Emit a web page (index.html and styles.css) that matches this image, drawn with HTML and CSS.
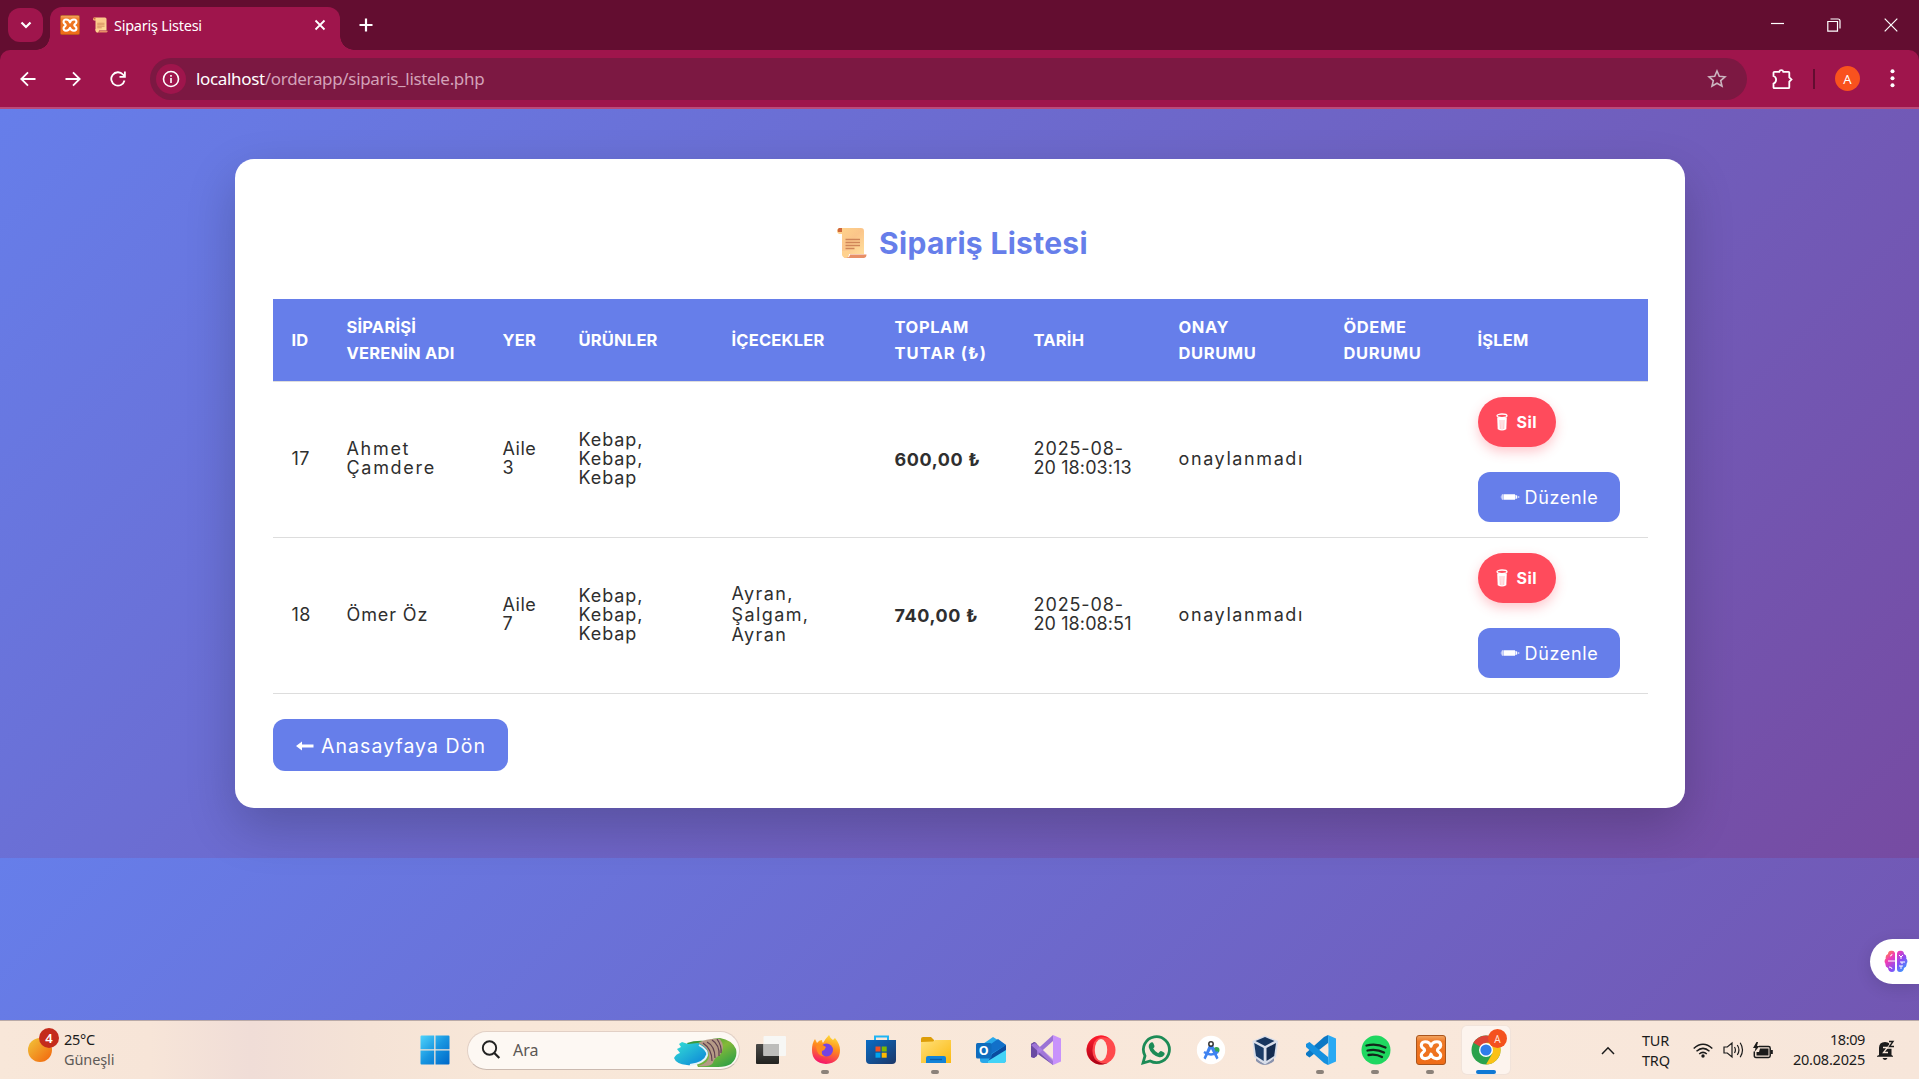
FILE: index.html
```html
<!DOCTYPE html>
<html lang="tr">
<head>
<meta charset="utf-8">
<title>Sipariş Listesi</title>
<link rel="stylesheet" href="styles.css">
</head>
<body>
<svg class="defs" width="0" height="0">
  <defs>
    <linearGradient id="gScroll" x1="0" y1="0" x2="1" y2="1"><stop offset="0" stop-color="#ffd58c"/><stop offset=".5" stop-color="#fbc58a"/><stop offset="1" stop-color="#ffdf9c"/></linearGradient>
    <linearGradient id="gXampp" x1="0" y1="0" x2="0" y2="1"><stop offset="0" stop-color="#f3a765"/><stop offset=".2" stop-color="#ee7a28"/><stop offset="1" stop-color="#ef6b16"/></linearGradient>
    <linearGradient id="gWin" x1="0" y1="0" x2="1" y2="1"><stop offset="0" stop-color="#4fd3fb"/><stop offset=".5" stop-color="#1795e0"/><stop offset="1" stop-color="#0067c8"/></linearGradient>
    <linearGradient id="gSun" x1="0" y1="0" x2="1" y2="1"><stop offset="0" stop-color="#f1c63a"/><stop offset="1" stop-color="#f2630c"/></linearGradient>
    <linearGradient id="gFox" x1=".7" y1="0" x2=".4" y2="1"><stop offset="0" stop-color="#ffe03a"/><stop offset=".45" stop-color="#ff8a1c"/><stop offset="1" stop-color="#f5126d"/></linearGradient>
    <linearGradient id="gFolder" x1="0" y1="0" x2="1" y2="1"><stop offset="0" stop-color="#ffe07a"/><stop offset="1" stop-color="#fbb90f"/></linearGradient>
    <linearGradient id="gStore" x1="0" y1="0" x2="1" y2="1"><stop offset="0" stop-color="#0a6cc4"/><stop offset="1" stop-color="#1c3768"/></linearGradient>
    <linearGradient id="gOpera" x1="0" y1="0" x2="0" y2="1"><stop offset="0" stop-color="#ff1b2d"/><stop offset="1" stop-color="#a70014"/></linearGradient>
    <linearGradient id="gBrain" x1="0" y1="0" x2="1" y2="1"><stop offset="0" stop-color="#ff9b2f"/><stop offset=".3" stop-color="#f23bb4"/><stop offset=".6" stop-color="#8a4cf5"/><stop offset="1" stop-color="#1fb0ff"/></linearGradient>
    <linearGradient id="gSea" x1="0" y1="0" x2="1" y2="1"><stop offset="0" stop-color="#35e0d5"/><stop offset="1" stop-color="#0a7fd8"/></linearGradient>
    <linearGradient id="gHill" x1="0" y1="0" x2="1" y2="1"><stop offset="0" stop-color="#1c8a3c"/><stop offset=".5" stop-color="#84b938"/><stop offset="1" stop-color="#1d9b4a"/></linearGradient>
    <linearGradient id="gDark" x1="0" y1="0" x2="0" y2="1"><stop offset="0" stop-color="#4a4a48"/><stop offset="1" stop-color="#222220"/></linearGradient>
    <symbol id="scroll" viewBox="0 0 30 32">
      <path d="M2 1h22q3 0 3 3v23H7q-2 0-2-3V7H2Q0 6 0 4t2-3z" fill="url(#gScroll)"/>
      <path d="M2 1h3v4H1Q0 2 2 1z" fill="#d0683c"/>
      <path d="M5 24q0 5 3 7h19q2.500-.5 2.500-3.500H13q0 2-2 3" fill="#e88f66"/>
      <path d="M5 24v4q1 3 4 3 3-.5 3-4V24z" fill="#ffd28f"/>
      <path d="M8.500 12.500h14.500M8.500 15.500h14.500M8.500 18.500h14.500M8.500 21.500h9" stroke="#cf8558" stroke-width="1.500" fill="none"/>
    </symbol>
    <symbol id="xampp" viewBox="0 0 30 30">
      <rect x=".5" y=".5" width="29" height="29" rx="2.500" fill="url(#gXampp)" stroke="#a9551d"/>
      <path d="M15 11.200C14 7 10.800 6.800 9 6.800 6.500 6.800 5.300 8.500 5.300 10.500 5.300 13 8.600 13.500 8.600 15.200S5.300 17.500 5.300 20C5.300 22.200 6.800 23.600 9 23.600 11.500 23.600 14 23 15 19.200 16 23 18.500 23.600 21 23.600 23.200 23.600 24.700 22.200 24.700 20 24.700 17.500 21.400 16.900 21.400 15.200S24.700 13 24.700 10.500C24.700 8.500 23.500 6.800 21 6.800 19.200 6.800 16 7 15 11.200z" fill="none" stroke="#fff" stroke-width="3.100" stroke-linejoin="round"/>
    </symbol>
    <symbol id="trash" viewBox="0 0 12 18">
      <ellipse cx="6" cy="2.800" rx="5" ry="1.800" fill="none" stroke="#fff" stroke-width="1.300"/>
      <path d="M1.200 4.500h9.600l-.5 11.700q-4.300 2.500-8.600 0z" fill="#fff"/>
      <path d="M4 7l.3 9M6 7v9.500M8 7l-.3 9" stroke="#ffa3ab" stroke-width=".7"/>
    </symbol>
    <symbol id="pencil" viewBox="0 0 20 8">
      <path d="M1.500 1.300v5.400Q0 4 1.500 1.300zM2.300 1.300h1.300v5.400H2.300zM4 1.300H15v5.400H4zM15.400 1.800L17.300 2.800v2.400l-1.900 1zM18 3.200L20 4l-2 .8z" fill="#fff"/>
    </symbol>
  </defs>
</svg>

<header class="browser">
  <div class="tabstrip">
    <button class="tab-search"><svg width="12" height="8" viewBox="0 0 12 8"><path d="M1.500 1.500L6 6l4.500-4.500" class="ln w2"/></svg></button>
    <div class="tab">
      <svg width="20" height="20"><use href="#xampp"/></svg>
      <svg class="tab-emoji" width="15" height="16"><use href="#scroll"/></svg>
      <span class="tab-title">Sipariş Listesi</span>
      <svg class="tab-close" width="12" height="12" viewBox="0 0 12 12"><path d="M1.500 1.500l9 9M10.500 1.500l-9 9" class="ln"/></svg>
    </div>
    <svg class="new-tab" width="14" height="14" viewBox="0 0 14 14"><path d="M7 .5v13M.5 7h13" class="ln w2"/></svg>
    <div class="window-buttons">
      <svg width="13" height="14" viewBox="0 0 13 14"><path d="M0 5.500h13" class="ln w1"/></svg>
      <svg width="14" height="14" viewBox="0 0 14 14"><path d="M.8 3.500h9.700v9.700H.8zM3.500 1h7.500q2 0 2 2v7.500" class="ln w1"/></svg>
      <svg width="14" height="14" viewBox="0 0 14 14"><path d="M.7 .7l12.600 12.600M13.300 .7L.7 13.300" class="ln w1"/></svg>
    </div>
  </div>
  <div class="toolbar">
    <div class="nav">
      <svg width="16" height="16" viewBox="0 0 16 16"><path d="M15.500 8H1.500M8 1.300L1.300 8 8 14.700" class="ln"/></svg>
      <svg width="16" height="16" viewBox="0 0 16 16"><path d="M.5 8h14M8 1.300L14.700 8 8 14.700" class="ln"/></svg>
      <svg width="16" height="16" viewBox="0 0 16 16"><path d="M14.500 9.500A6.700 6.700 0 1 1 13 3.500L14.500 5.300M14.900 .5v5.400H9.500" class="ln"/></svg>
    </div>
    <div class="omnibox">
      <span class="site-info"><svg width="18" height="18" viewBox="0 0 18 18"><circle cx="9" cy="9" r="7.500" class="ln w15"/><path d="M9 8v5M9 5v1.800" class="ln w15"/></svg></span>
      <span class="url"><b>localhost</b>/orderapp/siparis_listele.php</span>
      <svg class="star" width="20" height="20" viewBox="0 0 20 20"><path d="M10 2l2.300 5.300 5.700.5-4.300 3.800 1.300 5.600L10 14.200 5 17.200l1.300-5.600L2 7.800l5.700-.5z" fill="none" stroke="#cbb5bf" stroke-width="1.600"/></svg>
    </div>
    <svg class="puzzle" width="22" height="22" viewBox="0 0 22 22"><path d="M3.500 3.800h4.800q.3-1.600 2-1.600t2 1.600H17.500q.8 0 .8.800V9.300l2.200 2.200-2.200 2.200v5.700q0 .8-.8.800H3.300q-.8 0-.8-.8V15.500q2.600-1 2.600-3.800T2.500 8V4.600q0-.8 1-.8z" class="ln"/></svg>
    <span class="divider"></span>
    <span class="avatar">A</span>
    <svg class="menu" width="5" height="19" viewBox="0 0 5 19"><circle cx="2.500" cy="2.300" r="2" fill="#fff"/><circle cx="2.500" cy="9.300" r="2" fill="#fff"/><circle cx="2.500" cy="16.300" r="2" fill="#fff"/></svg>
  </div>
</header>

<main class="page">
  <section class="card">
    <h2 class="heading"><svg width="30" height="32"><use href="#scroll"/></svg><span>Sipariş Listesi</span></h2>
    <table class="orders">
      <colgroup><col class="c-id"><col class="c-name"><col class="c-place"><col class="c-food"><col class="c-drink"><col class="c-total"><col class="c-date"><col class="c-approve"><col class="c-pay"><col class="c-action"></colgroup>
      <thead>
        <tr><th>ID</th><th>SİPARİŞİ<br>VERENİN ADI</th><th>YER</th><th>ÜRÜNLER</th><th>İÇECEKLER</th><th class="wide">TOPLAM<br><span class="sum">TUTAR (₺)</span></th><th>TARİH</th><th class="wide">ONAY<br>DURUMU</th><th class="wide">ÖDEME<br>DURUMU</th><th>İŞLEM</th></tr>
      </thead>
      <tbody>
        <tr>
          <td>17</td><td class="name">Ahmet<br>Çamdere</td><td>Aile<br>3</td><td class="food">Kebap,<br>Kebap,<br>Kebap</td><td></td><td class="total">600,00 ₺</td><td class="date">2025-08-<br><span>20 18:03:13</span></td><td class="status">onaylanmadı</td><td></td>
          <td><div class="actions"><a class="btn-delete"><svg width="12" height="18"><use href="#trash"/></svg>Sil</a><a class="btn-edit"><svg width="20" height="8"><use href="#pencil"/></svg>Düzenle</a></div></td>
        </tr>
        <tr>
          <td>18</td><td class="person">Ömer Öz</td><td>Aile<br>7</td><td class="food">Kebap,<br>Kebap,<br>Kebap</td><td class="drinks">Ayran,<br>Şalgam,<br>Ayran</td><td class="total">740,00 ₺</td><td class="date">2025-08-<br><span>20 18:08:51</span></td><td class="status">onaylanmadı</td><td></td>
          <td><div class="actions"><a class="btn-delete"><svg width="12" height="18"><use href="#trash"/></svg>Sil</a><a class="btn-edit"><svg width="20" height="8"><use href="#pencil"/></svg>Düzenle</a></div></td>
        </tr>
      </tbody>
    </table>
    <a class="btn-home"><svg width="18" height="10" viewBox="0 0 18 10"><path d="M0 5L6 .5V3.500H17.500V6.500H6V9.500z" fill="#fff"/></svg>Anasayfaya Dön</a>
  </section>
  <div class="assistant"><svg width="24" height="23" viewBox="0 0 24 23"><path d="M11 3Q10 0 7 .8 4 1 4 4 1 5 1.800 8.500-.5 11 1.500 14 1 17 4 18q.5 4 4 4 3 0 3-3zM13 3q1-3 4-2.200 3 .2 3 3.200 3 1 2.200 4.500 2.300 2.500.3 5.500.5 3-2.500 4-.5 4-4 4-3 0-3-3z" fill="url(#gBrain)"/><path d="M11 11H4M6 6q2 0 2-2M5 17q3 0 3 2M15 5l2 2 2-2M17 7v2M16 12h5M18 12v2M15 16h4M17 16v3" fill="none" stroke="#fff" stroke-width="1"/></svg></div>
</main>

<footer class="taskbar">
  <div class="weather">
    <span class="sun"><svg width="24" height="24" viewBox="0 0 24 24"><circle cx="12" cy="12" r="12" fill="url(#gSun)"/></svg><span class="count">4</span></span>
    <span class="forecast"><span>25°C</span><span class="muted">Güneşli</span></span>
  </div>
  <div class="start"><svg width="30" height="30" viewBox="0 0 30 30"><path d="M1.500.5H14.200V14.200H.5V1.500q0-1 1-1zM15.500.5H28.500q1 0 1 1V14.200H15.500zM.5 15.500H14.200V29.500H1.500q-1 0-1-1zM15.500 15.500H29.500V28.500q0 1-1 1H15.500z" fill="url(#gWin)"/></svg></div>
  <div class="search">
    <svg width="20" height="20" viewBox="0 0 20 20"><circle cx="8.500" cy="8" r="6.700" fill="none" stroke="#222" stroke-width="1.900"/><path d="M13.300 13l5 5" stroke="#222" stroke-width="2.300"/></svg>
    <span>Ara</span>
    <svg class="scene" width="63" height="30" viewBox="0 0 63 30">
      <path d="M13 5q8-3 20-2 6-3 13-3 12 2 16 11 2 9-5 15-5 3-13 3H24z" fill="url(#gHill)"/>
      <path d="M24 5Q34 0 46 1q6 8 0 16-6 3-7 8-3 4-15 3 11-3 11-10 0-8-11-13z" fill="#b59a86"/>
      <path d="M33 4q8 4 8 16M38 2q8 5 7 16M43 1q5 7 4 14M29 5q9 6 9 18" fill="none" stroke="#5d3f4e" stroke-width="1.200"/>
      <path d="M8 4l6 2 10-1q9 4 10 10 0 6-7 9-7 4-14 3Q2 26 0 20q2-4 6-5l-3-4 4-2-2-3z" fill="url(#gSea)"/>
      <path d="M25 7q9 5 8 10-2 8-17 10" fill="none" stroke="#e6f3fa" stroke-width="2"/>
    </svg>
  </div>
  <div class="apps">
    <div class="app"><svg width="30" height="30" viewBox="0 0 30 30"><rect x="0" y="9" width="23" height="20" rx="1" fill="url(#gDark)"/><rect x="7.500" y="1" width="22.500" height="20" rx="1" fill="#f7f7f5"/><path d="M7.500 9H23V21H7.500z" fill="#bdbdbb"/></svg></div>
    <div class="app running"><svg width="30" height="30" viewBox="0 0 30 30"><path d="M1 15Q1 8 4 4l2 4q2-3 5-3 0 2 1 3 3-5 6-8 1 3 4 5l2-2q5 6 5 12 0 13-14 14Q1 28 1 15z" fill="url(#gFox)"/><circle cx="15.500" cy="15" r="6.500" fill="#7543e3"/><path d="M5 11q5-3 10 1-1 3-4 4-1 4 3 5.500Q6 22 5 11z" fill="#ff8b21"/></svg></div>
    <div class="app"><svg width="30" height="30" viewBox="0 0 30 30"><path d="M9 5V1.500h13V5" fill="none" stroke="#1fb5f5" stroke-width="2"/><path d="M0 5h30v20q0 4-4 4H4q-4 0-4-4z" fill="url(#gStore)"/><path d="M9.500 11.500h5v5h-5z" fill="#f25022"/><path d="M15.700 11.500h5v5h-5z" fill="#7fba00"/><path d="M9.500 17.700h5v5h-5z" fill="#00a4ef"/><path d="M15.700 17.700h5v5h-5z" fill="#ffb900"/></svg></div>
    <div class="app running"><svg width="30" height="30" viewBox="0 0 30 30"><path d="M0 4q0-2 2-2h8l3 3v5H0z" fill="#dd9d08"/><path d="M0 7l12-.5L14 5H30V28H0z" fill="url(#gFolder)"/><path d="M5 28v-5q0-2 2-2h16q2 0 2 2v5z" fill="#1283d8"/><path d="M9 24.500h12" stroke="#0b5ca8" stroke-width="1.300"/></svg></div>
    <div class="app"><svg width="30" height="30" viewBox="0 0 30 30"><path d="M4 11L17 2l13 8v15q0 3-3 3H7q-3 0-3-3z" fill="#28a8ea"/><path d="M12 11l10-7 8 6-15 9z" fill="#1270c9"/><path d="M16 19l14-9v6L12 27z" fill="#0a4ca0"/><path d="M12 26l18-11v10q0 3-3 3H12z" fill="#43d3f7"/><rect x="0" y="8" width="15.500" height="15.500" rx="1.500" fill="#0f6cbd"/><text x="7.700" y="20" text-anchor="middle" class="glyph">O</text></svg></div>
    <div class="app"><svg width="30" height="30" viewBox="0 0 30 30"><path d="M0 9l4-2 18 19v4L4 17v4l-4 1z" fill="#7252aa"/><path d="M0 22l3 1L22 6V0L0 20z" fill="#9b73d5"/><path d="M0 9l3-2 3 2v12l-3 2-3-1z" fill="#6a4aa2"/><path d="M4 8l18 16v6L0 10z" fill="#b183e8" opacity=".75"/><path d="M22 0l8 3.500v23L22 30z" fill="#c892fb"/></svg></div>
    <div class="app"><svg width="30" height="30" viewBox="0 0 30 30"><circle cx="15" cy="15" r="14.500" fill="#ff4a4d"/><path d="M15 .5a14.500 14.500 0 1 0 9 26q-4 3-9 1.500Q6 25 6.500 15 6.500 5 14 2.500q6-1 10 1.500Q20 .5 15 .5z" fill="url(#gOpera)"/><ellipse cx="15" cy="15" rx="6.200" ry="11" fill="#f8e8db"/></svg></div>
    <div class="app"><svg width="30" height="30" viewBox="0 0 30 30"><path d="M2 28l2-7.200A13 13 0 1 1 9.200 26z" fill="none" stroke="#1c8b56" stroke-width="2.800"/><path d="M10 7.500q1.800-.8 2.500 1l1 2.500q.2 1-1.300 2.500 2 3.500 5 4.700l1.700-1.800q.8-.7 1.800-.1l2.300 1.200q1.200.8.300 2.500-1.800 2.700-5 2.300Q10 20 7.800 12.500q-.5-3.300 2.200-5z" fill="#1c8b56"/></svg></div>
    <div class="app"><svg width="30" height="30" viewBox="0 0 30 30"><circle cx="15" cy="15" r="14.200" fill="#fff"/><circle cx="20.500" cy="15" r="3" fill="#35a853"/><path d="M13.500 9h3l6 14-2 1.500L15 14 9.500 24.500 7.500 23z" fill="#3f83f1"/><path d="M8 17q7 5 14 0" fill="none" stroke="#3f83f1" stroke-width="2.300"/><circle cx="15" cy="9" r="2.200" fill="#fff" stroke="#333" stroke-width="1.500"/></svg></div>
    <div class="app"><svg width="30" height="30" viewBox="0 0 30 30"><path d="M5 22q9 12 18 0v4q-9 8-18 0z" fill="#8a93ad"/><path d="M14 .5l13 5.500-2 16-11 7.500L3 22 1.500 6z" fill="#d8deea"/><path d="M14 2L23.500 6 14 11 4.500 6z" fill="#17355e"/><path d="M3.200 8l9.500 5v13L5 21z" fill="#1b3c67"/><path d="M25 8L15.500 13v13l7.700-5z" fill="#142c50"/></svg></div>
    <div class="app running"><svg width="30" height="30" viewBox="0 0 30 30"><path d="M22 0v8L3.500 22.500 0 20v-2L18 2z" fill="#0b78c5"/><path d="M0 12v-3l3.500-2L22 22v8l-4-2z" fill="#1590df"/><path d="M22 0l8 3.500v23L22 30q1-15 0-30z" fill="#29a9f3"/></svg></div>
    <div class="app running"><svg width="30" height="30" viewBox="0 0 30 30"><circle cx="15" cy="15" r="14.500" fill="#1fd760"/><path d="M5.500 10.500q10-2.500 19 2M6.500 15.500q9-2 16.500 2M7.500 20q7.500-1.500 13.500 2" fill="none" stroke="#12251a" stroke-width="2.300" stroke-linecap="round"/></svg></div>
    <div class="app running"><svg width="30" height="30"><use href="#xampp"/></svg></div>
    <div class="app active"><svg width="30" height="30" viewBox="0 0 30 30"><circle cx="15" cy="15" r="14.500" fill="#2ba24c"/><path d="M15 15L2.400 7.700A14.500 14.500 0 0 1 27.500 7.700H15z" fill="#dc4437"/><path d="M15 7.700H27.600A14.500 14.500 0 0 1 15 29.500l6.300-11z" fill="#fbc116"/><circle cx="15" cy="15" r="7" fill="#fff"/><circle cx="15" cy="15" r="5.600" fill="#2f7de9"/></svg><span class="profile">A</span></div>
  </div>
  <div class="tray">
    <svg class="chevron" width="14" height="9" viewBox="0 0 14 9"><path d="M1 8l6-6.200L13 8" class="dk"/></svg>
    <span class="lang"><span>TUR</span><span>TRQ</span></span>
    <svg class="wifi" width="20" height="15" viewBox="0 0 20 15"><path d="M.7 5.500Q10-3 19.300 5.500M3.500 8.200Q10 2.500 16.500 8.200M6.200 11Q10 7.700 13.800 11" class="dk"/><circle cx="10" cy="13" r="1.700" fill="#1b1b1b"/></svg>
    <svg class="sound" width="21" height="18" viewBox="0 0 21 18"><path d="M1 6h3.300L9 2v14l-4.700-4H1zM11.500 6q1.800 3 0 6M14.300 4q3.300 5 0 10M17.200 1.800q4.600 7.200 0 14.400" class="dk w12"/></svg>
    <svg class="battery" width="20" height="17" viewBox="0 0 20 17"><path d="M6 4.500h9.500q1.700 0 1.700 1.700v7.600q0 1.700-1.700 1.700H3q-1.700 0-1.700-1.700V9.500" class="dk"/><path d="M7 6.500h8.500v7h-12V10H6zM18 8h1.800v4H18zM3.500 0L0 6h2.500L1.500 10 6.500 4H4L5 0z" fill="#1b1b1b"/></svg>
    <span class="clock"><span>18:09</span><span class="day">20.08.2025</span></span>
    <svg class="bell" width="18" height="20" viewBox="0 0 18 20"><path d="M2 15V8q0-6 6-6 6 0 6.500 6v7l1.500 1v.8H0V16z" fill="#1b1b1b"/><path d="M5.500 18h5q-1 2-2.500 2t-2.500-2z" fill="#1b1b1b"/><path d="M6 7.500h4.500L6.500 12.500H11" stroke="#f7e7da" stroke-width="1.300" fill="none"/><path d="M12 2h4L12.500 7H17" stroke="#f7e7da" stroke-width="3.500" fill="none"/><path d="M12 1.500h4L12.500 6.500H17" stroke="#1b1b1b" stroke-width="1.400" fill="none"/></svg>
  </div>
</footer>
</body>
</html>
```
FILE: styles.css
```css
* { box-sizing: border-box; }
body { margin: 0; width: 1919px; height: 1079px; overflow: hidden; display: flex; flex-direction: column; font-family: "Noto Sans", sans-serif; }
svg { display: block; flex: none; }
.defs { position: absolute; }
.ln { fill: none; stroke: #fff; stroke-width: 1.8; }
.ln.w2 { stroke-width: 2.2; }
.ln.w15 { stroke-width: 1.6; }
.ln.w1 { stroke-width: 1.2; }
.dk { fill: none; stroke: #1b1b1b; stroke-width: 1.5; }
.dk.w12 { stroke-width: 1.2; }

/* Browser frame */
.browser { height: 109px; flex: none; background: #630d30; }
.tabstrip { height: 50px; display: flex; align-items: flex-start; padding: 7px 0 0 8px; }
.tab-search { width: 35px; height: 34px; margin-top: 1px; padding: 0; border: 0; border-radius: 12px; background: #9f154c; display: flex; align-items: center; justify-content: center; }
.tab { position: relative; width: 290px; height: 43px; margin-left: 7px; padding: 0 14px 7px 10px; border-radius: 12px 12px 0 0; background: #9f154c; display: flex; align-items: center; color: #fff; }
.tab::before, .tab::after { content: ""; position: absolute; bottom: 0; width: 14px; height: 14px; }
.tab::before { left: -14px; background: radial-gradient(circle at 0 0, transparent 13.5px, #9f154c 14px); }
.tab::after { right: -14px; background: radial-gradient(circle at 100% 0, transparent 13.5px, #9f154c 14px); }
.tab-emoji { margin-left: 13px; }
.tab-title { margin-left: 6px; font-size: 14.5px; letter-spacing: -.25px; white-space: nowrap; }
.tab-close { margin-left: auto; }
.new-tab { margin: 11px 0 0 19px; }
.window-buttons { margin: 11px 21px 0 auto; display: flex; gap: 43px; }
.toolbar { height: 59px; background: #9f154c; border-bottom: 2px solid #bb4a79; border-radius: 10px 10px 0 0; display: flex; align-items: center; }
.nav { display: flex; gap: 29px; padding-left: 20px; width: 150px; }
.omnibox { width: 1597px; height: 42px; border-radius: 21px; background: #7c1842; display: flex; align-items: center; padding: 0 20px 0 6px; }
.site-info { width: 30px; height: 30px; border-radius: 50%; background: #9f154c; display: flex; align-items: center; justify-content: center; }
.url { margin-left: 10px; font-size: 17px; letter-spacing: -.33px; color: #d3a1b8; }
.url b { font-weight: 400; color: #fff; }
.star { margin-left: auto; }
.puzzle { margin-left: 24px; }
.divider { width: 2px; height: 20px; margin-left: 20px; background: #630d30; }
.avatar { width: 25px; height: 25px; margin-left: 20px; border-radius: 50%; background: #f9521e; color: #fff; font-size: 13px; display: flex; align-items: center; justify-content: center; }
.menu { margin-left: 30px; }

/* Orders page */
.page { position: relative; height: 911px; flex: none; padding: 50px 234px 0 235px; background: linear-gradient(135deg, #667eea 0%, #764ba2 100%) 0 0 / 100% 749px repeat-y; font-family: Inter, sans-serif; color: #2f2f2f; }
.card { height: 649px; padding: 38px 37px 0 38px; border-radius: 19px; background: #fff; box-shadow: 0 19px 50px rgba(0, 0, 0, .2); }
.heading { height: 102px; margin: 0; display: flex; justify-content: center; padding: 30px 0 0 4px; gap: 12px; color: #667eea; font-size: 30px; font-weight: 700; line-height: 32px; letter-spacing: .3px; }
.orders { width: 1375px; table-layout: fixed; border-collapse: separate; border-spacing: 0; }
.c-id { width: 55px; } .c-name { width: 156px; } .c-place { width: 76px; } .c-food { width: 153px; } .c-drink { width: 163px; }
.c-total { width: 139px; } .c-date { width: 145px; } .c-approve { width: 165px; } .c-pay { width: 134px; } .c-action { width: 189px; }
th, td { padding: 0 0 0 18.500px; text-align: left; vertical-align: middle; white-space: nowrap; border-bottom: 1px solid #ddd; }
th { height: 83px; background: #667eea; background-clip: padding-box; color: #fff; font-size: 16.500px; font-weight: 700; line-height: 26px; letter-spacing: .2px; }
th.wide { letter-spacing: .6px; }
.sum { letter-spacing: 1.1px; }
td { height: 156px; padding-bottom: 3px; font-size: 18px; font-weight: 400; line-height: 19px; letter-spacing: .5px; }
td:last-child { padding-bottom: 1px; }
td.name { letter-spacing: 1.7px; }
td.person { letter-spacing: .9px; }
td.food { letter-spacing: .9px; }
td.drinks { padding-bottom: 1px; line-height: 20.500px; letter-spacing: 1.4px; }
td.total { font-weight: 700; letter-spacing: .6px; padding-bottom: 1px; }
td.date { letter-spacing: .9px; }
td.date span { letter-spacing: .1px; }
td.status { letter-spacing: 1.6px; }
.actions { display: flex; flex-direction: column; align-items: flex-start; gap: 25px; padding-top: 1px; }
.btn-delete, .btn-edit, .btn-home { display: flex; align-items: center; color: #fff; }
.btn-delete { width: 78px; height: 50px; padding-left: 18px; gap: 9px; border-radius: 25px; background: #ff4b5c; box-shadow: 0 5px 12px rgba(255, 75, 92, .3); font-size: 16px; font-weight: 700; }
.btn-edit { width: 142px; height: 50px; padding-left: 22px; gap: 5px; border-radius: 12px; background: #667eea; font-size: 18px; letter-spacing: .65px; }
.btn-home { width: 235px; height: 52px; margin-top: 25px; padding-top: 1px; padding-left: 23px; gap: 7px; border-radius: 12px; background: #667eea; font-size: 19.500px; letter-spacing: 1.05px; }
.assistant { position: absolute; right: 0; top: 830px; width: 49px; height: 45px; border-radius: 23px 0 0 23px; background: #fff; box-shadow: 0 4px 16px rgba(0, 0, 0, .12); display: flex; align-items: center; padding-left: 14px; }

/* Taskbar */
.taskbar { height: 59px; flex: none; border-top: 1px solid #b9aaa8; background: linear-gradient(90deg, #f8e7d9 0, #f7e5d8 150px, #f0ddd7 250px, #f5e3d6 370px, #f8e7d8 500px, #f9e8db 1400px, #f7e6da 100%); display: flex; align-items: center; color: #1b1b1b; font-size: 14.500px; line-height: 20px; }
.weather { width: 410px; padding-left: 28px; display: flex; align-items: center; }
.sun { position: relative; }
.count { position: absolute; left: 11px; top: -10px; width: 20px; height: 20px; border-radius: 50%; background: #c42b1c; color: #fff; font-size: 13px; font-weight: 600; text-align: center; }
.forecast, .lang, .clock { display: flex; flex-direction: column; }
.forecast { margin-left: 12px; padding-bottom: 2px; letter-spacing: -.3px; }
.muted { color: #5e5a57; letter-spacing: -.1px; }
.start { width: 57px; padding-left: 10px; }
.search { width: 273px; height: 39px; border: 1px solid #e2d0c5; border-bottom-color: #cbbab0; border-radius: 20px; background: #fdf8f3; display: flex; align-items: center; padding: 0 2px 0 13px; color: #5b5754; font-size: 16px; }
.search span { margin-left: 12px; }
.scene { margin: 5px 0 0 auto; }
.apps { display: flex; margin-left: 3px; }
.app { position: relative; width: 55px; height: 48px; display: flex; align-items: center; justify-content: center; }
.app.running::after, .app.active::after { content: ""; position: absolute; bottom: 0; left: 23px; width: 8px; height: 4px; border-radius: 2px; background: #8b8179; }
.app.active { width: 48px; margin-left: 4px; border-radius: 5px; background: #fdf4ee; box-shadow: 0 0 0 1px #f1e3da; }
.app.active::after { left: 14px; width: 20px; background: #0f78d4; }
.profile { position: absolute; left: 26px; top: 3px; width: 19px; height: 19px; border-radius: 50%; background: #f4511e; color: #ffe2d8; font-size: 10px; text-align: center; line-height: 20px; }
.glyph { font: 700 12.500px "Noto Sans", sans-serif; fill: #fff; }
.tray { margin-left: auto; display: flex; align-items: center; padding-right: 24px; }
.lang { margin-left: 27px; padding-bottom: 1px; letter-spacing: -.2px; width: 29px; }
.wifi { margin-left: 22px; }
.sound { margin-left: 10px; }
.battery { margin-left: 9px; }
.clock { width: 92px; padding-bottom: 2px; align-items: flex-end; letter-spacing: -.4px; }
.day { letter-spacing: -.2px; }
.bell { margin-left: 12px; }
```
